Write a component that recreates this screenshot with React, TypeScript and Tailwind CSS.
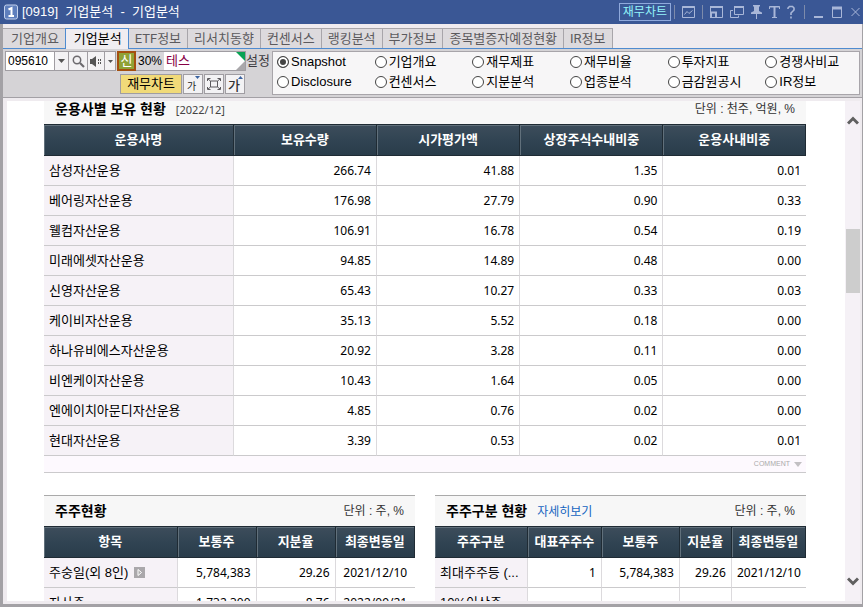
import { clsx } from "clsx";
import type { ReactNode } from "react";

const tabs = [
  "기업개요",
  "기업분석",
  "ETF정보",
  "리서치동향",
  "컨센서스",
  "랭킹분석",
  "부가정보",
  "종목별증자예정현황",
  "IR정보",
];

const views = [
  "Snapshot",
  "기업개요",
  "재무제표",
  "재무비율",
  "투자지표",
  "경쟁사비교",
  "Disclosure",
  "컨센서스",
  "지분분석",
  "업종분석",
  "금감원공시",
  "IR정보",
];

const funds = [
  ["삼성자산운용", "266.74", "41.88", "1.35", "0.01"],
  ["베어링자산운용", "176.98", "27.79", "0.90", "0.33"],
  ["웰컴자산운용", "106.91", "16.78", "0.54", "0.19"],
  ["미래에셋자산운용", "94.85", "14.89", "0.48", "0.00"],
  ["신영자산운용", "65.43", "10.27", "0.33", "0.03"],
  ["케이비자산운용", "35.13", "5.52", "0.18", "0.00"],
  ["하나유비에스자산운용", "20.92", "3.28", "0.11", "0.00"],
  ["비엔케이자산운용", "10.43", "1.64", "0.05", "0.00"],
  ["엔에이치아문디자산운용", "4.85", "0.76", "0.02", "0.00"],
  ["현대자산운용", "3.39", "0.53", "0.02", "0.01"],
];

function WindowButton({ label, width, children }: { label: string; width: number; children: ReactNode }) {
  return (
    <button type="button" aria-label={label} className="text-[#a9b7d8]">
      <svg width={width} height="14" viewBox={`0 0 ${width} 14`} fill="none" stroke="currentColor" className="block">
        {children}
      </svg>
    </button>
  );
}

function Separator() {
  return <span className="h-[14px] w-px bg-[#7d8bab]" />;
}

function TitleBar() {
  return (
    <header className="flex h-6 shrink-0 items-center bg-[#3a5795] pr-[3px] pl-1 text-white">
      <svg width="14" height="16" viewBox="0 0 14 16" className="block">
        <rect x="0.5" y="1" width="13" height="14" rx="2" fill="#5f7fbd" stroke="#c5d3ee" />
        <path d="M4.500 5.500 7.500 4v8M4.500 12h5.500" fill="none" stroke="#fff" strokeWidth="2" />
      </svg>
      <h1 className="ml-1 flex-1 text-[13px] whitespace-pre">[0919]  기업분석  -  기업분석</h1>
      <button
        type="button"
        className="mr-[3px] h-[18px] border border-[#8fa9dc] px-[3px] text-[12px] leading-4 text-[#93f5fb]"
      >
        재무차트
      </button>
      <div className="flex items-center gap-[7px]">
        <Separator />
        <WindowButton label="차트" width={13}>
          <path d="M.5 1.500h12v11H.5z" />
          <path d="M.5 2h12" strokeWidth="2" />
          <path d="M2.500 9.500 5 6.500l2 2 3.500-3" />
        </WindowButton>
        <Separator />
        <WindowButton label="화면 크기" width={13}>
          <path d="M.5 1.500h12v11H.5zM.5 7.500h6v5" />
          <path d="M0 2h13M0 7.500h7" strokeWidth="2" />
          <path d="M6 7v6M1 7v6" strokeWidth="2" />
        </WindowButton>
        <WindowButton label="화면 복사" width={14}>
          <path d="M4 2h10" strokeWidth="2" />
          <path d="M4.500 1v8.500h9V1M3 5.500H.5v7h8v-2" />
        </WindowButton>
        <WindowButton label="고정" width={11}>
          <path d="M2 0h7v1.500H8V6l3 1.500V9H0V7.500L3 6V1.500H2z" fill="currentColor" stroke="none" />
          <path d="M5.500 9v5" />
        </WindowButton>
        <WindowButton label="글꼴" width={11}>
          <path d="M.5 4V1.500h10V4" />
          <path d="M5.500 1v11" strokeWidth="2" />
          <path d="M3 12.500h5M.5 2h10" />
        </WindowButton>
        <WindowButton label="도움말" width={8}>
          <path d="M1 4V3l1.500-1.500h3L7 3v2L4 8v2M4 11.500v2" strokeWidth="1.600" />
        </WindowButton>
      </div>
      <div className="ml-[9px] flex items-center gap-[9px]">
        <Separator />
        <WindowButton label="최소화" width={9}>
          <path d="M0 12h9" strokeWidth="2" />
        </WindowButton>
        <WindowButton label="최대화" width={10}>
          <path d="M.5 2v10.500h9V2" />
          <path d="M0 3h10" strokeWidth="3" />
        </WindowButton>
        <WindowButton label="닫기" width={9}>
          <path d="m.5 3 8 8M8.500 3l-8 8" />
        </WindowButton>
      </div>
    </header>
  );
}

function Tabs() {
  return (
    <nav className="flex h-[21px] shrink-0 items-stretch border-b border-[#4f8bd0] font-['Roboto','Noto_Sans_CJK_KR',sans-serif]">
      {tabs.map((tab, index) => (
        <button
          key={tab}
          type="button"
          className={clsx(
            "border-t border-r px-[6px] text-[13px] leading-5 whitespace-nowrap",
            index < 2 && "pl-2",
            index === 1
              ? "-mb-px -ml-px border-l border-[#4f8bd0] bg-[#f0edf1] text-black"
              : "border-[#a8a5aa] bg-[#dddadd] text-[#5c5a5e]"
          )}
        >
          {tab}
        </button>
      ))}
    </nav>
  );
}

function ToolButton({ label, className, children }: { label: string; className?: string; children: ReactNode }) {
  return (
    <button
      type="button"
      aria-label={label}
      className={clsx("flex h-5 items-center justify-center border border-[#a09da2] bg-[#f3f2f4]", className)}
    >
      {children}
    </button>
  );
}

function Caret() {
  return (
    <svg width="7" height="4" viewBox="0 0 7 4">
      <path d="M0 0h7L3.500 4z" fill="#555" />
    </svg>
  );
}

function Toolbar() {
  return (
    <div className="flex shrink-0 items-start border-b border-[#a3a0a5] bg-[#d5d3d6] py-[2px] pr-[2px] pl-[2px]">
      <div className="w-[267px] shrink-0">
        <div className="flex items-center">
          <input
            aria-label="종목코드"
            defaultValue="095610"
            className="h-5 w-[50px] border border-[#a09da2] bg-white px-[2px] text-[12px] outline-none"
          />
          <ToolButton label="종목 목록" className="-ml-px w-[15px]">
            <Caret />
          </ToolButton>
          <ToolButton label="종목 검색" className="-ml-px w-5">
            <svg width="13" height="13" viewBox="0 0 13 13" fill="none" stroke="#6c6a6e">
              <circle cx="5" cy="5" r="3.700" strokeWidth="1.500" />
              <path d="m8 8 4 4" strokeWidth="2.200" />
            </svg>
          </ToolButton>
          <ToolButton label="소리" className="-ml-px w-[18px]">
            <svg width="13" height="11" viewBox="0 0 13 11" fill="#555">
              <path d="M0 3h2l4-3v11L2 8H0z" />
              <path d="M8 3h1v2H8zM8 6h1v2H8zM10 3h1v2h-1zM10 6h1v2h-1z" />
            </svg>
          </ToolButton>
          <ToolButton label="소리 설정" className="-ml-px w-3">
            <svg width="5" height="3" viewBox="0 0 5 3">
              <path d="M0 0h5L2.500 3z" fill="#555" />
            </svg>
          </ToolButton>
          <div className="ml-px flex h-5 w-[129px] items-stretch border border-[#a09da2] bg-white text-[13px] leading-[18px]">
            <span className="-my-px -ml-px w-[19px] border-2 border-[#a4500f] bg-[#8fa236] text-center leading-4 text-white">
              신
            </span>
            <span className="w-7 bg-[#d8d6d9] text-center text-[12px]">30%</span>
            <span className="flex-1 pl-[2px] text-[#860045]">테스</span>
            <svg width="9" height="18" viewBox="0 0 9 18">
              <path d="M0 0h9v9z" fill="#08a354" />
              <path d="M9 9v9H0z" fill="#aaa8ab" />
            </svg>
          </div>
          <span className="text-[13px] leading-5 text-[#3c3a3e]">설정</span>
        </div>
        <div className="mt-[3px] flex justify-end pr-[27px]">
          <button
            type="button"
            className="h-5 border border-[#a09da2] bg-[#f1da79] px-[6px] text-[13px] leading-[18px]"
          >
            재무차트
          </button>
          <ToolButton label="글자 작게" className="ml-px w-5">
            <svg width="14" height="16" viewBox="0 0 14 16">
              <path d="M9 0h5l-2.500 3z" fill="#3a62a0" />
              <text x="1" y="14" fontSize="10" fill="#222">가</text>
            </svg>
          </ToolButton>
          <ToolButton label="화면 맞춤" className="ml-px w-5">
            <svg width="14" height="12" viewBox="0 0 14 12" fill="none" stroke="#5b595d">
              <path d="M.5 3V.5h3M10.500.5h3V3M13.500 9v2.500h-3M3.500 11.500h-3V9M3.500 3h7v6h-7zM1 1l2.500 2M13 1l-2.500 2M1 11l2.500-2M13 11l-2.500-2" />
            </svg>
          </ToolButton>
          <ToolButton label="글자 크게" className="ml-px w-5">
            <svg width="16" height="16" viewBox="0 0 16 16">
              <path d="M11 3h5l-2.500-3z" fill="#3a62a0" />
              <text x="1" y="14" fontSize="13" fontWeight="500" fill="#333">가</text>
            </svg>
          </ToolButton>
        </div>
      </div>
      <fieldset className="grid h-11 flex-1 grid-cols-6 items-center border border-[#a8a5aa] bg-[#f7f6f7] pb-[2px]">
        {views.map((view, index) => (
          <label key={index} className="flex items-center gap-[2px] pl-1 text-[13px] leading-5 whitespace-nowrap">
            <input
              type="radio"
              name="view"
              defaultChecked={index === 0}
              className="size-3 shrink-0 appearance-none rounded-full border border-[#444] bg-white checked:bg-[#444] checked:shadow-[inset_0_0_0_2px_#fff]"
            />
            {view}
          </label>
        ))}
      </fieldset>
    </div>
  );
}

function SectionHeader({ title, unit, children }: { title: string; unit: string; children?: ReactNode }) {
  return (
    <div className="flex h-[30px] items-center bg-[#f7f7f7] pr-[11px] pl-[11px]">
      <h2 className="text-[14px] font-bold">{title}</h2>
      <div className="ml-[10px] flex-1">{children}</div>
      <span className="text-[12px] text-[#333]">{unit}</span>
    </div>
  );
}

type DataTableProps = {
  label: string;
  columns: string[];
  widths: string[];
  rows: ReactNode[][];
  lastCentered?: boolean;
};

function DataTable({ label, columns, widths, rows, lastCentered }: DataTableProps) {
  return (
    <table aria-label={label} className="w-full table-fixed border-separate border-spacing-0">
      <thead>
        <tr className="h-8">
          {columns.map((column, index) => (
            <th
              key={column}
              scope="col"
              className={clsx(
                "border-y border-r border-y-[#1f2b34] border-r-[#1f2b34] bg-linear-to-b from-[#3d4d5b] via-[#314453] to-[#293c4a] p-0 text-[13px] leading-5 font-bold whitespace-nowrap text-white shadow-[inset_1px_1px_0_#61707b]",
                widths[index]
              )}
            >
              {column}
            </th>
          ))}
        </tr>
      </thead>
      <tbody>
        {rows.map((row, rowIndex) => (
          <tr key={rowIndex} className="h-[30px]">
            {row.map((cell, index) => (
              <td
                key={index}
                className={clsx(
                  "border-b border-[#cbcacc] p-0 px-[5px] leading-5 whitespace-nowrap",
                  index === 0 ? "bg-[#f6f2f7] text-[13px]" : "font-['Noto_Sans'] text-[12px]",
                  index > 0 && (lastCentered && index === row.length - 1 ? "text-center" : "text-right"),
                  index < row.length - 1 && "border-r border-r-[#dcdadd]"
                )}
              >
                {cell}
              </td>
            ))}
          </tr>
        ))}
      </tbody>
    </table>
  );
}

function FundHoldings() {
  return (
    <section>
      <div className="-mt-[7px]">
        <SectionHeader title="운용사별 보유 현황" unit="단위 : 천주, 억원, %">
          <span className="font-['Noto_Sans'] text-[11px] text-[#444]">[2022/12]</span>
        </SectionHeader>
      </div>
      <DataTable
        label="운용사별 보유 현황"
        columns={["운용사명", "보유수량", "시가평가액", "상장주식수내비중", "운용사내비중"]}
        widths={["w-[24.9%]", "w-[18.8%]", "w-[18.8%]", "w-[18.8%]", "w-[18.7%]"]}
        rows={funds}
      />
      <div className="flex h-[17px] items-center justify-end border-b border-[#cbcacc] bg-[#fdf9fe] pr-1">
        <button type="button" className="flex items-center gap-1 font-['Liberation_Sans'] text-[7px] text-[#aaa]">
          COMMENT
          <svg width="8" height="5" viewBox="0 0 8 5">
            <path d="M0 0h8L4 5z" fill="#c2c0c3" />
          </svg>
        </button>
      </div>
    </section>
  );
}

function Shareholders() {
  return (
    <section className="min-w-0 border-t border-[#aaa]">
      <SectionHeader title="주주현황" unit="단위 : 주, %" />
      <DataTable
        label="주주현황"
        lastCentered
        columns={["항목", "보통주", "지분율", "최종변동일"]}
        widths={["w-[36%]", "w-[21.3%]", "w-[21.3%]", "w-[21.4%]"]}
        rows={[
          [
            <span className="flex items-center gap-[6px]">
              주숭일(외 8인)
              <button type="button" aria-label="펼치기">
                <svg width="11" height="11" viewBox="0 0 11 11" className="block">
                  <path d="M0 0h11v11H0z" fill="#aaa8ab" />
                  <path d="M4 2.500v6l3.500-3z" fill="#aaa" stroke="#fff" />
                </svg>
              </button>
            </span>,
            "5,784,383",
            "29.26",
            "2021/12/10",
          ],
          ["자사주", "1,732,300", "8.76", "2022/09/21"],
        ]}
      />
    </section>
  );
}

function ShareholderTypes() {
  return (
    <section className="min-w-0 border-t border-[#aaa]">
      <SectionHeader title="주주구분 현황" unit="단위 : 주, %">
        <a href="#" className="text-[12px] text-[#1464c0]">
          자세히보기
        </a>
      </SectionHeader>
      <DataTable
        label="주주구분 현황"
        lastCentered
        columns={["주주구분", "대표주주수", "보통주", "지분율", "최종변동일"]}
        widths={["w-[25%]", "w-[20%]", "w-[21%]", "w-[14%]", "w-[20%]"]}
        rows={[
          ["최대주주등 (...", "1", "5,784,383", "29.26", "2021/12/10"],
          ["10%이상주...", "", "", "", ""],
        ]}
      />
    </section>
  );
}

function ScrollBar() {
  return (
    <div className="flex w-[15px] shrink-0 flex-col items-center bg-[#f5f1f6] pt-[15px] pb-[15px]">
      <svg width="12" height="9" viewBox="0 0 12 9" fill="none" stroke="#606060" strokeWidth="3">
        <path d="M1 7.500 6 2.500l5 5" />
      </svg>
      <div className="flex w-full flex-1 flex-col items-end">
        <div className="flex-[104]" />
        <div className="w-[14px] flex-[64] bg-[#cdcdcd]" />
        <div className="flex-[284]" />
      </div>
      <svg width="12" height="9" viewBox="0 0 12 9" fill="none" stroke="#606060" strokeWidth="3">
        <path d="m1 1.500 5 5 5-5" />
      </svg>
    </div>
  );
}

export default function App() {
  return (
    <div className="flex h-screen flex-col overflow-hidden bg-[#efebef] font-['Liberation_Sans','Noto_Sans_CJK_KR',sans-serif] text-black">
      <TitleBar />
      <div className="flex min-h-0 flex-1 flex-col border-r border-b-3 border-l-3 border-[#a3a1a5] pt-1">
        <Tabs />
        <Toolbar />
        <div className="flex min-h-0 flex-1 pt-[3px] pr-[2px] pb-[3px] pl-1">
          <main className="min-w-0 flex-1 overflow-hidden bg-white pr-[39px] pl-[37px]">
            <FundHoldings />
            <div className="mt-[22px] grid grid-cols-2 gap-5">
              <Shareholders />
              <ShareholderTypes />
            </div>
          </main>
          <ScrollBar />
        </div>
      </div>
    </div>
  );
}
